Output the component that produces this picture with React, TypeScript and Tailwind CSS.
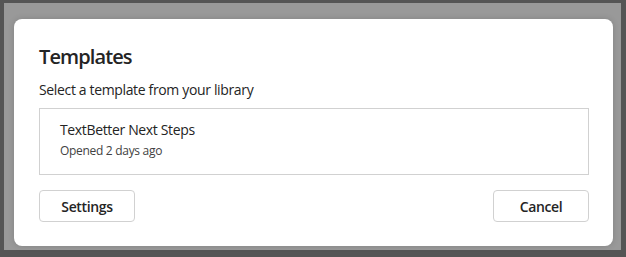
export default function App() {
  return (
    <div
      className="w-[626px] h-[257px] bg-[#555555] pt-[3px] pl-[4px] pr-[5px] pb-[7px]"
      style={{ fontFamily: '"Segoe UI", "Open Sans", sans-serif' }}
    >
      <div className="h-full bg-[#999999] pt-4 pl-[10px] pr-2 pb-1">
        <div className="h-full bg-white rounded-lg shadow-[0_0_6px_rgba(0,0,0,0.15)] pt-6 pb-6 pl-[25px] pr-6 flex flex-col text-[#242424]">
          <h2 className="text-[20px] leading-7 font-semibold tracking-[-0.9px]">Templates</h2>
          <p className="mt-[9px] text-[14px] leading-5 tracking-[-0.35px]">Select a template from your library</p>
          <div className="mt-2 h-[68px] border border-[#d1d1d1] px-5 pt-[11px]">
            <div className="text-[14px] leading-5 tracking-[-0.35px]">TextBetter Next Steps</div>
            <div className="mt-[3px] text-[12px] leading-4 text-[#424242] tracking-[-0.3px]">Opened 2 days ago</div>
          </div>
          <div className="mt-[15px] flex justify-between">
            <button className="w-[96px] h-8 rounded border border-[#d1d1d1] bg-white text-[14px] font-semibold tracking-[-0.35px]">
              Settings
            </button>
            <button className="w-[96px] h-8 rounded border border-[#d1d1d1] bg-white text-[14px] font-semibold tracking-[-0.35px]">
              Cancel
            </button>
          </div>
        </div>
      </div>
    </div>
  );
}
